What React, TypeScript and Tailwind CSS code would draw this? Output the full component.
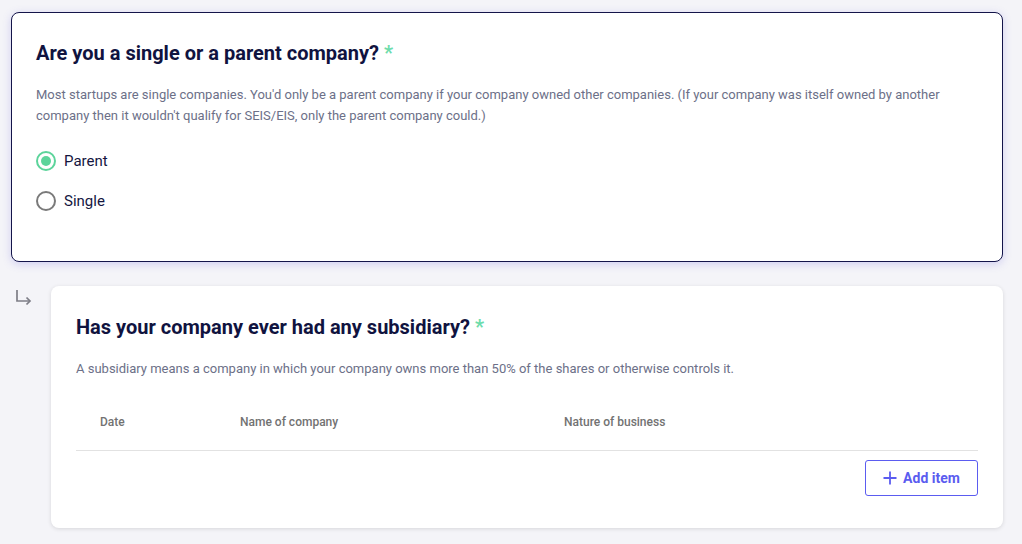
function Radio({ checked, label }: { checked: boolean; label: string }) {
  return (
    <label className="flex items-center gap-2 h-5">
      <span
        className={
          checked
            ? "flex items-center justify-center w-5 h-5 rounded-full border-2 border-[#5cd49b]"
            : "flex items-center justify-center w-5 h-5 rounded-full border-2 border-[#7a7a7a]"
        }
      >
        {checked && <span className="w-2.5 h-2.5 rounded-full bg-[#5cd49b]" />}
      </span>
      <span className="text-[15px] text-[#14163f]">{label}</span>
    </label>
  );
}

function SubArrow() {
  return (
    <svg width="18" height="18" viewBox="0 0 18 18" fill="none" stroke="#7d7d86" strokeWidth="1.7">
      <path d="M2 1V12H15" />
      <path d="M11.5 8.5L15 12L11.5 15.5" />
    </svg>
  );
}

export default function App() {
  return (
    <div className="w-[1022px] h-[544px] overflow-hidden bg-[#f4f4f8] font-['Roboto',sans-serif] pt-3 pl-[11px] pr-[19px]">
      <div className="bg-white border border-[#14154a] rounded-lg shadow-[0_2px_8px_rgba(100,90,220,0.25)] h-[250px] px-6 pt-[28px]">
        <h2 className="text-[20px] font-bold text-[#10133f] leading-6">
          Are you a single or a parent company? <span className="text-[#6ddcab]">*</span>
        </h2>
        <p className="mt-[19px] text-[13px] leading-[21px] text-[#6c7088]">
          Most startups are single companies. You'd only be a parent company if your company owned other companies. (If your company was itself owned by another company then it wouldn't qualify for SEIS/EIS, only the parent company could.)
        </p>
        <div className="mt-[25px] flex flex-col gap-5">
          <Radio checked label="Parent" />
          <Radio checked={false} label="Single" />
        </div>
      </div>

      <div className="flex mt-6">
        <div className="w-10 pl-1 pt-[3px]">
          <SubArrow />
        </div>
        <div className="flex-1 bg-white rounded-lg shadow-[0_1px_4px_rgba(0,0,0,0.12)] h-[242px] pl-[25px] pr-[25px] pt-[29px]">
          <h2 className="text-[20px] font-bold text-[#10133f] leading-6">
            Has your company ever had any subsidiary? <span className="text-[#6ddcab]">*</span>
          </h2>
          <p className="mt-[19px] text-[13px] leading-[21px] text-[#6c7088]">
            A subsidiary means a company in which your company owns more than 50% of the shares or otherwise controls it.
          </p>
          <div className="mt-[36px] flex text-[12px] font-medium text-[#727272] h-[15px] leading-[15px]">
            <div className="w-[164px] pl-6">Date</div>
            <div className="w-[324px]">Name of company</div>
            <div>Nature of business</div>
          </div>
          <div className="mt-[20px] border-t border-[#e2e2e2]" />
          <div className="flex justify-end mt-[9px]">
            <button className="flex items-center justify-center gap-1.5 w-[113px] h-[36px] border border-[#5b5cf0] rounded-[3px] text-[#5b5cf0] text-[14px] font-bold">
              <svg width="14" height="14" viewBox="0 0 14 14" stroke="#5b5cf0" strokeWidth="1.8">
                <path d="M7 0.5V13.5M0.5 7H13.5" />
              </svg>
              Add item
            </button>
          </div>
        </div>
      </div>
    </div>
  );
}
